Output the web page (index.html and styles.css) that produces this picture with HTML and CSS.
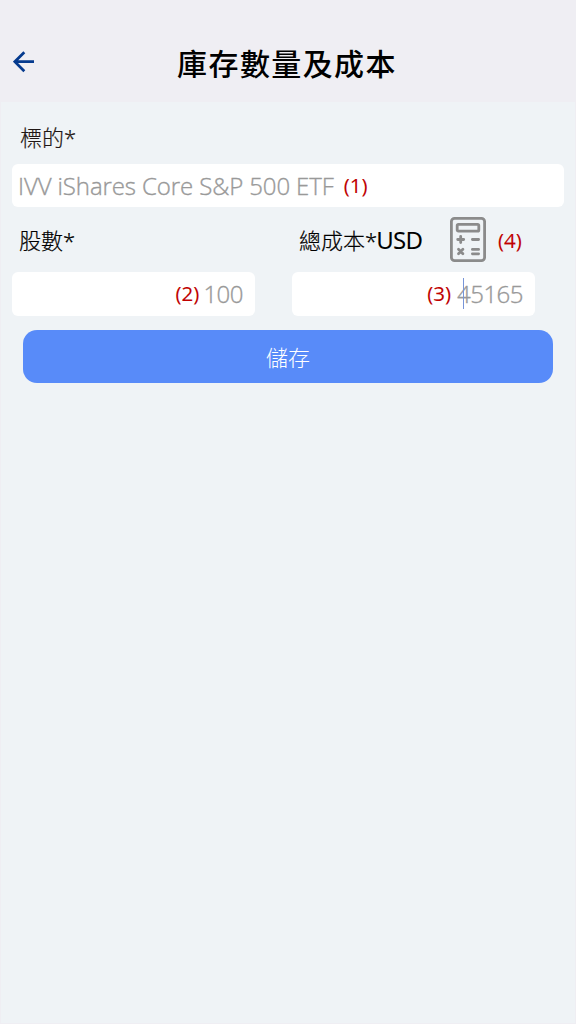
FILE: index.html
```html
<!DOCTYPE html>
<html lang="zh-Hant">
<head>
<meta charset="utf-8">
<title>庫存數量及成本</title>
<link rel="stylesheet" href="styles.css">
</head>
<body>
<div class="screen">
  <header class="header">
    <button class="back" aria-label="返回">
      <svg width="22" height="22" viewBox="0 0 22 22" fill="none" stroke="#053a8e" stroke-width="2.7"><path d="M21 10.7H2M11.3 1.2L1.8 10.7l9.5 9.5"/></svg>
    </button>
    <h1 class="title">庫存數量及成本</h1>
  </header>
  <main class="content">
    <label class="label label-target">標的<span class="star">*</span></label>
    <div class="input input-wide"><span class="value fund">IVV iShares Core S&amp;P 500 ETF</span><span class="note">(1)</span></div>
    <div class="columns">
      <section class="column">
        <div class="label-row"><label class="label">股數<span class="star">*</span></label></div>
        <div class="input input-number"><span class="note">(2)</span><span class="value shares">100</span></div>
      </section>
      <section class="column">
        <div class="label-row">
          <label class="label label-cost">總成本<span class="star">*</span><span class="currency">USD</span></label>
          <svg class="calculator" width="36" height="45" viewBox="0 0 36 45" fill="none" stroke="#8b8b8b" stroke-width="2.8" stroke-linecap="round">
            <rect x="1.4" y="1.4" width="33.2" height="42.2" rx="3.2"/>
            <rect x="7.2" y="7.4" width="21.6" height="6.8" rx="1.2"/>
            <path d="M7.7 22.5h6M10.7 19.5v6M22.4 22.5h6.2M8.5 32.3l4.4 4.4M12.9 32.3l-4.4 4.4M22.4 32.4h6.2M22.4 36.8h6.2"/>
          </svg>
          <span class="note">(4)</span>
        </div>
        <div class="input input-number"><span class="note note-cost">(3)</span><span class="value cost">45165<i class="caret"></i></span></div>
      </section>
    </div>
    <button class="save">儲存</button>
  </main>
</div>
</body>
</html>
```
FILE: styles.css
```css
* { box-sizing: border-box; }
body { margin: 0; background: #efeef3; font-family: "Open Sans", "Noto Sans CJK TC", sans-serif; color: #000; }
button { border: 0; padding: 0; background: none; font-family: inherit; }
.screen { display: flex; flex-direction: column; height: 1024px; padding: 0 1px 1px; }
.header { display: grid; grid-template-columns: 46px 1fr 46px; align-items: center; height: 102px; padding-top: 26px; }
.back { display: flex; padding-left: 12px; margin-top: -4px; }
.title { margin: 0; padding-right: 2px; text-align: center; font-size: 30px; line-height: 40px; font-weight: 500; letter-spacing: 1.4px; white-space: nowrap; }
.content { display: flex; flex-direction: column; flex: 1; background: #eff3f6; padding: 20px 11px 0; }
.label { font-size: 22px; line-height: 30px; font-weight: 300; white-space: nowrap; -webkit-text-stroke: 0.2px currentColor; }
.label-target { height: 42px; padding-left: 8px; color: #1f1614; }
.star { font-family: "Noto Sans", sans-serif; font-weight: 300; letter-spacing: -1px; }
.currency { font-size: 24px; font-family: "Noto Sans", sans-serif; font-weight: 400; -webkit-text-stroke: 0; letter-spacing: -0.7px; }
.label-cost { width: 124px; }
.input { display: flex; align-items: center; background: #fff; border-radius: 6px; white-space: nowrap; }
.input-wide { height: 43px; padding-left: 6px; gap: 10px; }
.input-number { height: 44px; justify-content: flex-end; padding-right: 12px; gap: 4px; }
.value { position: relative; margin-top: -1px; color: #999; font-size: 24px; font-weight: 300; letter-spacing: -0.11px; -webkit-text-stroke: 0.35px #999; }
.shares, .cost { letter-spacing: -0.5px; }
.note { color: #c00000; font-size: 20.5px; line-height: 28px; -webkit-text-stroke: 0.1px #c00000; }
.input .note { margin-top: -2px; }
.note-cost { margin-right: 2px; }
.columns { display: grid; grid-template-columns: 243px 243px; column-gap: 37px; }
.label-row { display: flex; align-items: center; height: 65px; padding: 0 0 0 7px; }
.calculator { margin: 0 12px 0 27px; }
.caret { position: absolute; left: 6px; top: 1px; width: 1px; height: 31px; background: #7895d8; }
.save { height: 53px; margin: 14px 11px 0; padding-bottom: 2px; border-radius: 14px; background: #588bf9; color: #fff; font-size: 22px; font-weight: 300; }
```
